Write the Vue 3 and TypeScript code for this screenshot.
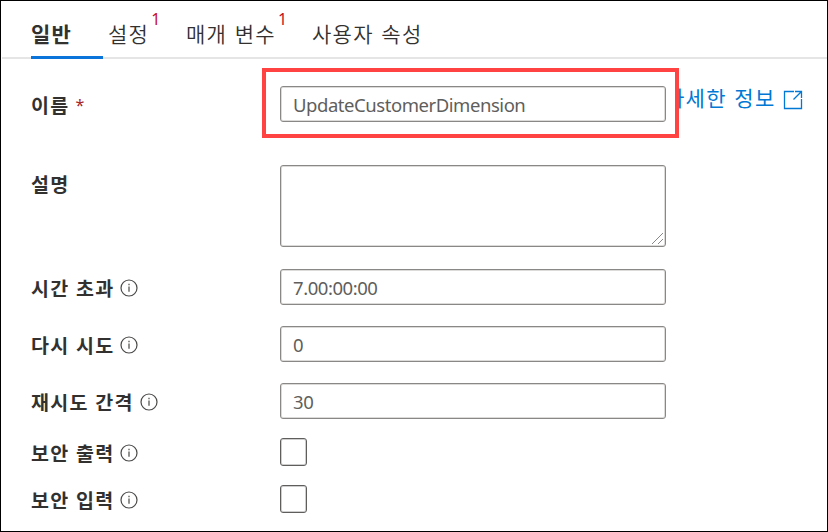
<script setup lang="ts">
import { ref } from 'vue'

interface Tab {
  id: string
  label: string
  errors?: number
}

interface Field {
  id: string
  label: string
  kind: 'text' | 'area' | 'check'
  value: string
  required?: boolean
  info?: boolean
}

const tabs: Tab[] = [
  { id: 'general', label: '일반' },
  { id: 'settings', label: '설정', errors: 1 },
  { id: 'params', label: '매개 변수', errors: 1 },
  { id: 'props', label: '사용자 속성' },
]
const active = ref('general')

const fields = ref<Field[]>([
  { id: 'name', label: '이름', kind: 'text', value: 'UpdateCustomerDimension', required: true },
  { id: 'description', label: '설명', kind: 'area', value: '' },
  { id: 'timeout', label: '시간 초과', kind: 'text', value: '7.00:00:00', info: true },
  { id: 'retry', label: '다시 시도', kind: 'text', value: '0', info: true },
  { id: 'interval', label: '재시도 간격', kind: 'text', value: '30', info: true },
  { id: 'output', label: '보안 출력', kind: 'check', value: '', info: true },
  { id: 'input', label: '보안 입력', kind: 'check', value: '', info: true },
])
</script>

<template>
  <main class="panel">
    <nav class="tabs">
      <button
        v-for="tab in tabs"
        :key="tab.id"
        class="tab"
        :class="[tab.id, { active: active === tab.id }]"
        @click="active = tab.id"
      >
        <span class="tab-label">{{ tab.label }}</span>
        <sup v-if="tab.errors" class="errors">{{ tab.errors }}</sup>
      </button>
    </nav>

    <form class="form" @submit.prevent>
      <div v-for="field in fields" :key="field.id" class="row" :class="field.id">
        <label class="label" :for="field.id">
          <span class="label-text">{{ field.label }}</span>
          <span v-if="field.required" class="required">*</span>
          <svg v-if="field.info" class="info" viewBox="0 0 18 18">
            <circle cx="9" cy="9" r="8" />
            <path d="M9 7.4v5.4M9 4.8v1.4" />
          </svg>
        </label>
        <div v-if="field.kind === 'text'" class="control">
          <input :id="field.id" v-model="field.value" class="box" type="text" spellcheck="false" />
          <div v-if="field.id === 'name'" class="highlight"></div>
        </div>
        <div v-else-if="field.kind === 'area'" class="control">
          <textarea :id="field.id" v-model="field.value" class="box area"></textarea>
          <svg class="grip" viewBox="0 0 13 13">
            <path d="M1 12L12 1M7 12L12 7" />
          </svg>
        </div>
        <input v-else :id="field.id" class="check" type="checkbox" />
        <a v-if="field.id === 'name'" class="more" href="#">
          <span>자세한 정보</span>
          <svg class="external" viewBox="0 0 20 20">
            <path d="M11 1.5H1.5v17h17V9M12 1.5h6.5V8M18.5 1.5L10.5 9.5" />
          </svg>
        </a>
      </div>
    </form>
  </main>
</template>

<style>
body {
  margin: 0;
  background: #fff;
}
</style>

<style scoped>
.panel {
  box-sizing: border-box;
  width: 828px;
  height: 532px;
  border: 1px solid #000;
  background: #fff;
  overflow: hidden;
  color: #323130;
  font-family: 'Noto Sans CJK KR', sans-serif;
}
.tabs {
  display: flex;
  height: 58px;
  margin-left: 1px;
  padding-left: 29px;
  box-sizing: border-box;
  border-bottom: 2px solid #e5e5e5;
}
.tab {
  display: flex;
  flex: none;
  position: relative;
  height: 58px;
  padding: 0;
  border: 0;
  background: none;
  color: #323130;
  font-family: inherit;
  font-size: 21px;
  font-weight: 350;
  line-height: 30px;
  letter-spacing: 1.3px;
  word-spacing: 1.5px;
  white-space: nowrap;
}
.tab-label {
  padding-top: 17px;
}
.general {
  width: 72px;
  margin-right: 5px;
}
.tab.active {
  font-weight: 700;
  border-bottom: 3px solid #0a74da;
}
.settings {
  width: 78px;
}
.params {
  width: 126px;
}
.errors {
  margin: 9px 0 0 2px;
  color: #c50f1f;
  font-family: 'Noto Sans', sans-serif;
  font-size: 16px;
  font-weight: 400;
  line-height: 18px;
  letter-spacing: 0;
}
.form {
  padding: 27px 0 0 30px;
}
.row {
  display: flex;
  align-items: flex-start;
  height: 36px;
  margin-bottom: 21px;
}
.row.name {
  margin-bottom: 43px;
}
.row.description {
  height: 82px;
  margin-bottom: 22px;
}
.row.interval {
  margin-bottom: 19px;
}
.row.output,
.row.input {
  height: 28px;
  margin-bottom: 19px;
}
.label {
  display: flex;
  flex: none;
  align-items: center;
  width: 249px;
  height: 37px;
  font-size: 19.5px;
  font-weight: 700;
  letter-spacing: 1.3px;
  word-spacing: 0.7px;
}
.output .label,
.input .label {
  height: 29px;
}
.required {
  margin: 1px 0 0 6px;
  color: #a4262c;
  font-family: 'Noto Sans', sans-serif;
  font-weight: 400;
  font-size: 16px;
}
.info {
  width: 18px;
  height: 18px;
  margin: 1px 0 0 6px;
  fill: none;
  stroke: #4a4948;
  stroke-width: 1.2;
}
.control {
  position: relative;
  flex: none;
  display: flex;
  width: 386px;
  height: 100%;
}
.box {
  box-sizing: border-box;
  width: 100%;
  height: 100%;
  margin: 0;
  padding: 0 12px;
  border: 1px solid #8a8886;
  border-radius: 3px;
  box-shadow: inset 0 0 0 1px rgba(138, 136, 134, 0.3);
  background: #fff;
  outline: none;
  resize: none;
  color: #605e5c;
  font-family: 'Noto Sans', sans-serif;
  font-size: 18.5px;
  letter-spacing: -0.45px;
}
.grip {
  position: absolute;
  right: 2px;
  bottom: 2px;
  width: 13px;
  height: 13px;
  fill: none;
  stroke: #8a8886;
  stroke-width: 1;
}
.highlight {
  position: absolute;
  z-index: -1;
  inset: -18px -13px -16px -18px;
  border: 4px solid #ff4343;
  background: #fff;
  pointer-events: none;
}
.control:has(.highlight) {
  z-index: 1;
}
.check {
  appearance: none;
  box-sizing: border-box;
  width: 27px;
  height: 28px;
  margin: 0;
  border: 1px solid #605e5c;
  border-radius: 3px;
  box-shadow: inset 0 0 0 1px rgba(96, 94, 92, 0.3);
  background: #fff;
}
.more {
  display: flex;
  flex: none;
  align-items: center;
  height: 24px;
  margin-left: -1px;
  color: #0078d4;
  font-size: 21px;
  font-weight: 400;
  letter-spacing: 1.3px;
  word-spacing: 1.5px;
  text-decoration: none;
  white-space: nowrap;
}
.more span {
  margin-top: -2px;
}
.external {
  width: 20px;
  height: 20px;
  margin: 4px 0 0 7px;
  fill: none;
  stroke: currentColor;
  stroke-width: 1.3;
}
</style>
